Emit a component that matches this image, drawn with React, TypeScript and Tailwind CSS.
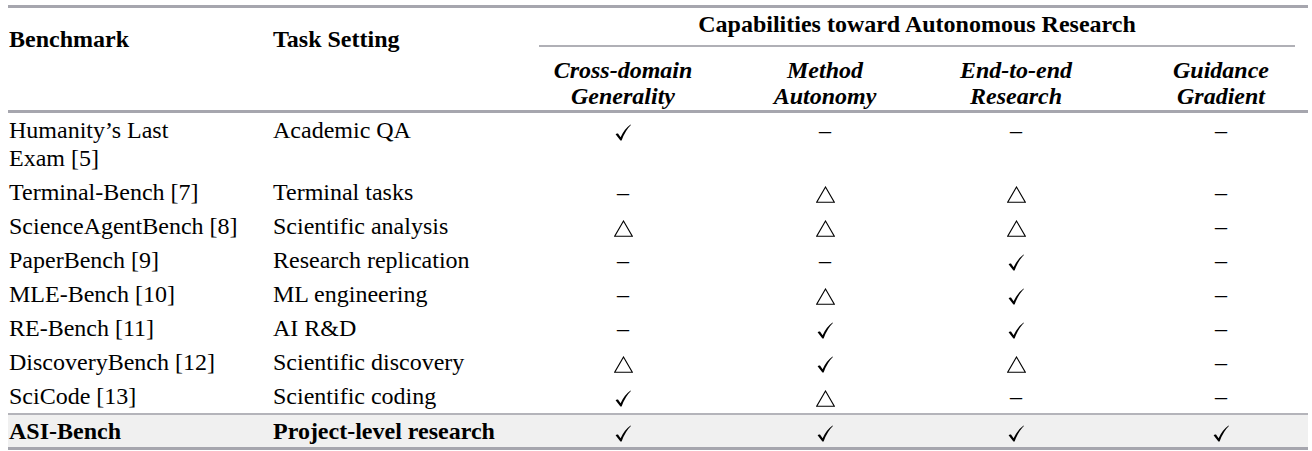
import React from "react";

const Check = () => (
  <svg width="16" height="17" viewBox="0 0 16 17" className="inline-block">
    <path
      d="M0.6 10.2 Q1.8 9.0 3.0 9.6 L5.6 13.2 Q9.2 5.2 15.6 0.6 L15.9 1.1 Q10.4 6.4 6.6 16.4 L5.4 16.6 Z"
      fill="#000"
    />
  </svg>
);

const Tri = () => (
  <svg width="19" height="17" viewBox="0 0 19 17" className="inline-block">
    <polygon points="9.5,1 18.3,16.2 0.7,16.2" fill="none" stroke="#000" strokeWidth="1.1" />
  </svg>
);

const Dash = () => <span className="inline-block">–</span>;

type M = "c" | "t" | "d";
const Mark = ({ m }: { m: M }) => (m === "c" ? <Check /> : m === "t" ? <Tri /> : <Dash />);

const rows: { b: React.ReactNode; t: string; m: M[] }[] = [
  { b: <>Humanity’s Last<br />Exam [5]</>, t: "Academic QA", m: ["c", "d", "d", "d"] },
  { b: "Terminal-Bench [7]", t: "Terminal tasks", m: ["d", "t", "t", "d"] },
  { b: "ScienceAgentBench [8]", t: "Scientific analysis", m: ["t", "t", "t", "d"] },
  { b: "PaperBench [9]", t: "Research replication", m: ["d", "d", "c", "d"] },
  { b: "MLE-Bench [10]", t: "ML engineering", m: ["d", "t", "c", "d"] },
  { b: "RE-Bench [11]", t: "AI R&D", m: ["d", "c", "c", "d"] },
  { b: "DiscoveryBench [12]", t: "Scientific discovery", m: ["t", "c", "t", "d"] },
  { b: "SciCode [13]", t: "Scientific coding", m: ["c", "t", "d", "d"] },
];

const grid = "grid grid-cols-[257px_229px_258px_146px_236px_174px]";

export default function App() {
  return (
    <div
      className="bg-white w-[1312px] h-[451px] overflow-hidden text-black pl-[8px] pt-[5px]"
      style={{ fontFamily: '"Liberation Serif", "Times New Roman", serif' }}
    >
      <div className="w-[1300px] text-[24px] leading-[28px]">
        <div className="h-[3px] bg-[#a6a6ae]" />
        {/* header */}
        <div className="grid grid-cols-[257px_229px_814px]">
          <div className="pt-[17px] pl-[1px] font-bold">Benchmark</div>
          <div className="pt-[17px] pl-[8px] font-bold">Task Setting</div>
          <div className="pt-[2px] pb-[1px]">
            <div className="ml-[45px] mr-[13px] text-center font-bold">Capabilities toward Autonomous Research</div>
            <div className="ml-[45px] mr-[13px] mt-[7px] h-[2px] bg-[#b0b0b6]" />
            <div className="grid grid-cols-[258px_146px_236px_174px] pt-[10px] font-bold italic leading-[26px] text-center">
              <div>Cross-domain<br />Generality</div>
              <div>Method<br />Autonomy</div>
              <div>End-to-end<br />Research</div>
              <div>Guidance<br />Gradient</div>
            </div>
          </div>
        </div>
        <div className="h-[3px] bg-[#a6a6ae]" />
        {/* body */}
        {rows.map((r, i) => (
          <div key={i} className={`${grid} py-[3px]`}>
            <div className="pl-[1px] whitespace-nowrap">{r.b}</div>
            <div className="pl-[8px] whitespace-nowrap">{r.t}</div>
            {r.m.map((m, j) => (
              <div key={j} className="text-center">
                <Mark m={m} />
              </div>
            ))}
          </div>
        ))}
        <div className="h-[2px] bg-[#b4b4ba]" />
        <div className={`${grid} py-[2px] bg-[#f0f0f0] font-bold`}>
          <div className="pl-[1px] whitespace-nowrap">ASI-Bench</div>
          <div className="pl-[8px] whitespace-nowrap">Project-level research</div>
          {["c", "c", "c", "c"].map((m, j) => (
            <div key={j} className="text-center">
              <Mark m={m as M} />
            </div>
          ))}
        </div>
        <div className="h-[3px] bg-[#a6a6ae]" />
      </div>
    </div>
  );
}
